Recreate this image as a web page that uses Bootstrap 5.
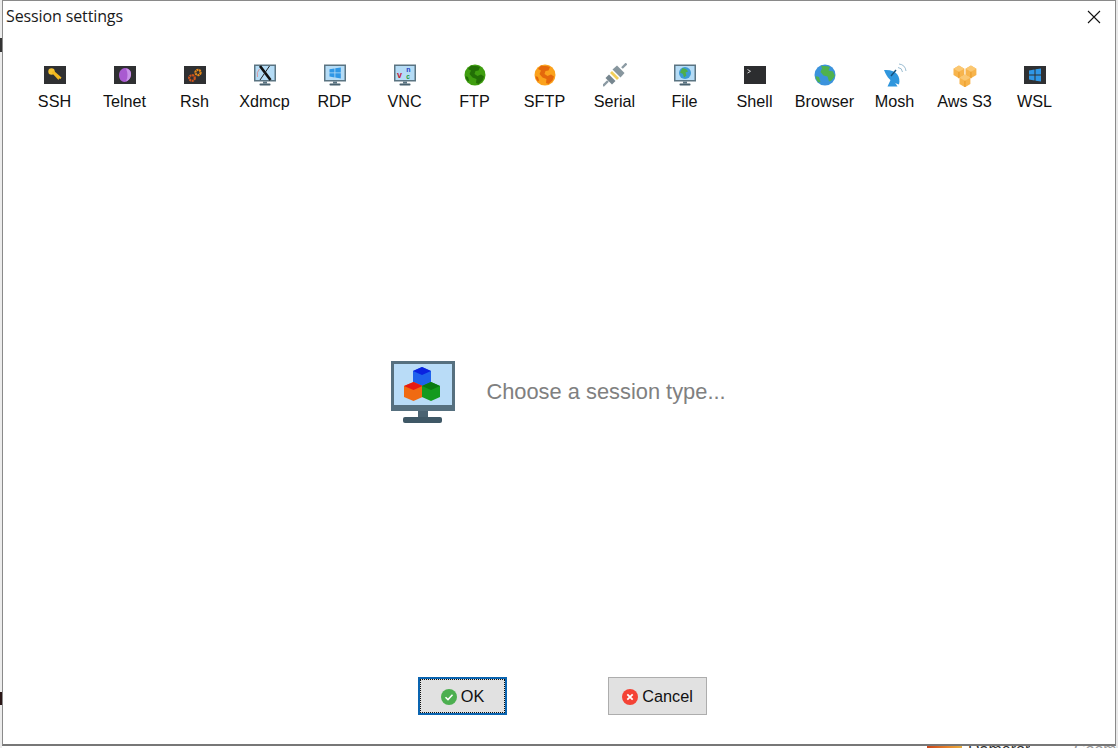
<!DOCTYPE html>
<html lang="en">
<head>
<meta charset="utf-8">
<title>Session settings</title>
<link href="https://cdn.jsdelivr.net/npm/bootstrap@5.3.0/dist/css/bootstrap.min.css" rel="stylesheet">
<style>
html,body{height:100%;overflow:hidden;background:#fff}
.backdrop-bit{position:absolute;display:block}
.bit-a{left:0;top:38px;width:2px;height:14px;background:#333}
.bit-b{left:0;top:692px;width:2px;height:13px;background:#2a1616}
.bit-c{left:927px;top:745px;width:35px;height:3px;background:linear-gradient(90deg,#c9431a,#e9852a 60%,#e8b040)}
.bit-d{left:968px;top:742px;font:16px/1 "Liberation Sans",sans-serif;color:#333;height:6px;overflow:hidden}
.bit-g{left:1074px;top:742px;font:16px/1 "Liberation Sans",sans-serif;color:#999;height:6px;overflow:hidden}
.bit-e{left:1116px;top:0;width:2px;height:748px;background:#e9e9e9}
.bit-f{left:0;top:0;width:2px;height:748px;background:#ececec}
.session-window{position:absolute;left:2px;top:0;width:1114px;height:746px;background:#fff;border:1px solid #8a8a8a;border-bottom:2px solid #777;font-family:"Liberation Sans",Arial,sans-serif}
.title-bar{height:32px;padding:0 0 0 3px;font:16px/30px "Open Sans","Noto Sans",sans-serif;color:#1a1a1a}
.title-text{letter-spacing:-.12px}
.close-x{width:32px;height:32px;margin-right:5px;padding:9px;border:0;background:transparent}
.type-strip{padding:30px 0 0 16.5px;height:83px}
.type-cell{width:70px;text-align:center;font-size:16.2px;line-height:18px;color:#111}
.type-cell svg{display:block;margin:0 auto 5px;width:24px;height:24px}
.centre-panel{gap:30px;padding:0 2px 10px 0}
.centre-panel svg{width:66px;height:64px}
.hint-text{font-size:21.85px;color:#808080;line-height:30px}
.foot-bar{gap:101px;padding:0 0 29px 7px}
.dlg-btn{height:38px;border-radius:0;background:#e1e1e1;font-size:16.3px;color:#111;padding:1px 0 0;display:flex;align-items:center;justify-content:center;gap:4px;line-height:1}
.dlg-btn svg{width:16px;height:16px}
.dlg-ok{width:89px;border:2px solid #0a64b0;outline:1px dotted #111;outline-offset:-3px}
.dlg-cancel{width:99px;border:1px solid #adadad}
</style>
</head>
<body>
<svg width="0" height="0" class="position-absolute">
<defs>
<g id="mon">
<rect x="1" y="1.500" width="22" height="17" fill="#5b7482"/>
<rect x="2.500" y="3" width="19" height="14" fill="#b5dcf6"/>
<rect x="10" y="18.500" width="4" height="2" fill="#5b7482"/>
<rect x="6.500" y="20.500" width="11" height="2" rx=".8" fill="#47606e"/>
</g>
<g id="dark"><rect x="1" y="3" width="22" height="18" fill="#2f3032"/></g>
<g id="land"><path d="M8 2.500c3 1 6 0 9 1.500l-1.500 3.500-3 .5-1 3 3 2 3.500-1.500 3 2-1.500 4-4 3.500-2.500-1 .5-4-4-1.500-3-3.500 1.500-3.500-3-1.500z"/><path d="M2.500 13l2.500 1 1 3.500-1 1c-1.500-1.500-2.500-3.500-2.500-5.500z"/></g>
<g id="cube"><path d="M0 2.600 3.400.6l3.400 2v4l-3.400 2-3.400-2z" fill="#f7b44c"/><path d="M0 2.600l3.400 2 3.400-2-3.400-2z" fill="#fbc873"/><path d="M3.400 4.600v4" stroke="#e99a25" stroke-width=".6"/></g>
</defs>
</svg>

<span class="backdrop-bit bit-f"></span><span class="backdrop-bit bit-e"></span>
<span class="backdrop-bit bit-a"></span><span class="backdrop-bit bit-b"></span>
<span class="backdrop-bit bit-c"></span><span class="backdrop-bit bit-d">Dameror</span><span class="backdrop-bit bit-g">Coom</span>

<div class="session-window d-flex flex-column" role="dialog">
  <div class="title-bar d-flex justify-content-between align-items-start flex-shrink-0">
    <span class="title-text">Session settings</span>
    <button class="close-x d-block" type="button" aria-label="Close"><svg width="14" height="14" viewBox="0 0 14 14" class="d-block"><path d="M1 1l12 12M13 1 1 13" stroke="#111" stroke-width="1.100" fill="none"/></svg></button>
  </div>

  <div class="type-strip d-flex flex-shrink-0">
    <div class="type-cell"><svg viewBox="0 0 24 24"><use href="#dark"/><circle cx="8.500" cy="8.500" r="3.200" fill="#f5c331"/><path d="M8.500 9.500l2-2 8 7-1 1.500-1.500-.5-.5 1.500z" fill="#f2b71f"/></svg>SSH</div>
    <div class="type-cell"><svg viewBox="0 0 24 24"><use href="#dark"/><path d="M12 5c4 0 6.500 3 6 7-.5 4-3 6.500-6.500 7-4-.500-5.500-3.500-5.500-7 0-4 3-7 6-7z" fill="#a95ad0"/><path d="M13 5.500c3.500.5 5.500 3.500 5 6.500-.5 3.500-2.500 5.500-5 6.500 2-4 2-9 0-13z" fill="#c993e8"/></svg>Telnet</div>
    <div class="type-cell"><svg viewBox="0 0 24 24"><use href="#dark"/><circle cx="15" cy="9.500" r="2.600" fill="none" stroke="#e98a18" stroke-width="2.200" stroke-dasharray="2 .6"/><circle cx="9" cy="15" r="2.800" fill="none" stroke="#d1541a" stroke-width="2.200" stroke-dasharray="2 .6"/></svg>Rsh</div>
    <div class="type-cell"><svg viewBox="0 0 24 24"><use href="#mon"/><path d="M7 3 17.500 17" stroke="#111" stroke-width="2.600"/><path d="M16.500 3 7 17" stroke="#222" stroke-width="1"/><path d="M4.500 14a8 8 0 0 1 2-8" stroke="#d88" stroke-width=".8" fill="none"/></svg>Xdmcp</div>
    <div class="type-cell"><svg viewBox="0 0 24 24"><use href="#mon"/><path d="M6.500 6.200l5-.8v4.100h-5zM12.300 5.300l5.500-.9v5.100h-5.500zM6.500 10.300h5v4.100l-5-.8zM12.300 10.300h5.500v5.100l-5.500-.9z" fill="#2f97e6"/></svg>RDP</div>
    <div class="type-cell"><svg viewBox="0 0 24 24"><use href="#mon"/><text x="4" y="14.500" font-size="9" font-weight="700" font-family="Liberation Sans" fill="#c2203a">v</text><text x="13.300" y="8.800" font-size="7" font-weight="700" font-family="Liberation Sans" fill="#2340c0">n</text><text x="13.300" y="16.400" font-size="6.500" font-weight="700" font-family="Liberation Sans" fill="#1a9a32">c</text></svg>VNC</div>
    <div class="type-cell"><svg viewBox="0 0 24 24"><circle cx="12" cy="12" r="10.500" fill="#3f9e10"/><use href="#land" fill="#226f06"/></svg>FTP</div>
    <div class="type-cell"><svg viewBox="0 0 24 24"><circle cx="12" cy="12" r="10.500" fill="#fba21c"/><use href="#land" fill="#e4680c"/></svg>SFTP</div>
    <div class="type-cell"><svg viewBox="0 0 24 24"><path d="M0 23l5-5" stroke="#8b9aa3" stroke-width="2.400"/><path d="M2.500 15l6.500 6.500 3.500-3.500L6 11.500z" fill="#76868f"/><path d="M7 10l7 7 2-2-7-7z" fill="#f2cf5a"/><path d="M9.500 6.500l8 8 4-4.500-7.500-7.500z" fill="#87969e"/><path d="M19 5l4.500-4.500" stroke="#8b9aa3" stroke-width="2.400"/></svg>Serial</div>
    <div class="type-cell"><svg viewBox="0 0 24 24"><use href="#mon"/><circle cx="12" cy="10" r="6" fill="#3d9ad6"/><path d="M9.500 5c2.500.5 4.500 1 5.500 3.500l-2.500 1 1 3-2.500 2-1-3.500L7 9.500z" fill="#4fae4a"/></svg>File</div>
    <div class="type-cell"><svg viewBox="0 0 24 24"><rect x="1" y="3" width="22" height="18" fill="#2c2d2f"/><path d="M4.500 6.500l3 1.800-3 1.800" stroke="#e6e6e6" stroke-width=".9" fill="none"/></svg>Shell</div>
    <div class="type-cell"><svg viewBox="0 0 24 24"><circle cx="12" cy="12" r="10.500" fill="#3b93dc"/><path d="M8 2.500c3 1 6 0 9 1.500l-1.500 3.500 4.500 1 2 4.500-3.500 4.500-2.500 1-1.500-5-4-1-3-3.500 1.500-3.500z" fill="#4fb24f"/><path d="M2.500 13l3.500 1 1.500 5-2 .5c-1.500-1.500-3-4-3-6.500z" fill="#4fb24f"/></svg>Browser</div>
    <div class="type-cell"><svg viewBox="0 0 24 24"><path d="M1 7c3 8 7 12 15 14.500C18 13 13 6 1 7z" fill="#2f96dd"/><path d="M8 16l-3.500 7.500h10L11 18z" fill="#2f96dd"/><path d="M8 13l5-6" stroke="#14507a" stroke-width="1.400"/><path d="M15 4.500a5 5 0 0 1 4.500 4.500M16 1a8 8 0 0 1 7 7" stroke="#8fb4cc" stroke-width=".9" fill="none"/></svg>Mosh</div>
    <div class="type-cell"><svg viewBox="0 0 24 24"><use href="#cube" transform="translate(.5 1.500) scale(1.600)"/><use href="#cube" transform="translate(12.500 1.500) scale(1.600)"/><use href="#cube" transform="translate(6.500 10.500) scale(1.600)"/></svg>Aws S3</div>
    <div class="type-cell"><svg viewBox="0 0 24 24"><use href="#dark"/><path d="M6 7.400l5.500-.9v5H6zM12.500 6.300l5.500-.9v6.100h-5.500zM6 12.500h5.500v5L6 16.600zM12.500 12.500H18v6.100l-5.500-.9z" fill="#2f97e6"/></svg>WSL</div>
  </div>

  <div class="centre-panel flex-grow-1 d-flex align-items-center justify-content-center">
    <svg viewBox="0 0 66 64">
      <rect x="1" y="1" width="64" height="50" fill="#56707f"/>
      <rect x="4" y="4" width="58" height="41" fill="#b9dcf7"/>
      <rect x="28" y="51" width="10" height="6" fill="#4a6372"/>
      <rect x="13" y="57" width="39" height="6" rx="2" fill="#3f5866"/>
      <path d="M32 7l9 4v12l-9 4-9-4V11z" fill="#1f62ec"/><path d="M23 11l9-4 9 4-9 4z" fill="#0a22e0"/>
      <path d="M23.500 22l9 4v11l-9 4-9.500-4V26z" fill="#f06a12"/><path d="M14 26l9.500-4 9 4-9 4z" fill="#e61a14"/>
      <path d="M41 22l9 4v11l-9 4-9-4V26z" fill="#149a1e"/><path d="M32 26l9-4 9 4-9 4z" fill="#0a7a12"/>
    </svg>
    <div class="hint-text">Choose a session type...</div>
  </div>

  <div class="foot-bar d-flex justify-content-center flex-shrink-0">
    <button type="button" class="btn dlg-btn dlg-ok"><svg viewBox="0 0 16 16"><circle cx="8" cy="8" r="8" fill="#4caf50"/><path d="M4.500 8.200l2.500 2.400 4.500-4.800" stroke="#fff" stroke-width="1.500" fill="none"/></svg>OK</button>
    <button type="button" class="btn dlg-btn dlg-cancel"><svg viewBox="0 0 16 16"><circle cx="8" cy="8" r="8" fill="#f44336"/><path d="M5.300 5.300l5.400 5.400M10.700 5.300l-5.400 5.400" stroke="#fff" stroke-width="1.800" fill="none"/></svg>Cancel</button>
  </div>
</div>
<script src="https://cdn.jsdelivr.net/npm/bootstrap@5.3.0/dist/js/bootstrap.bundle.min.js"></script>
</body>
</html>
